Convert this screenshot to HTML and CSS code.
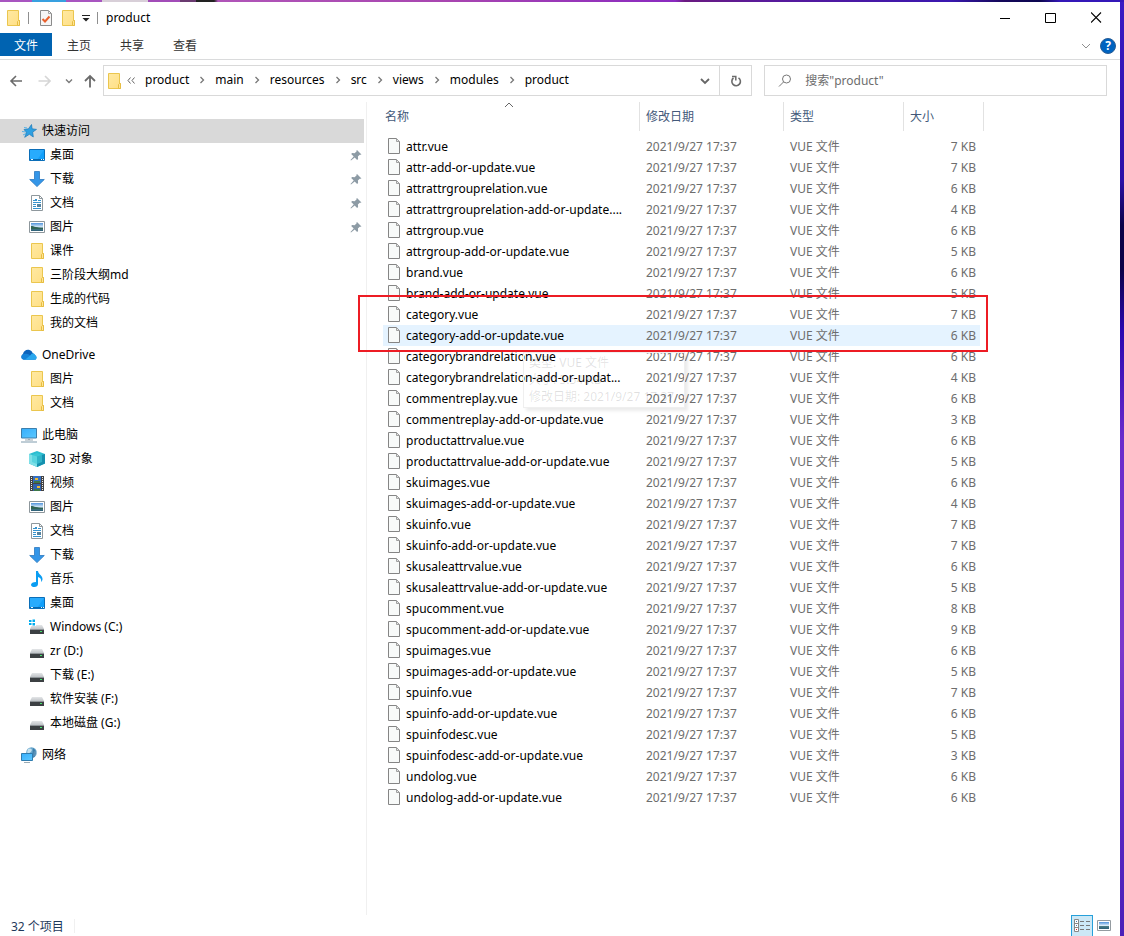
FILE: index.html
```html
<!DOCTYPE html>
<html lang="zh-CN">
<head>
<meta charset="utf-8">
<title>product</title>
<link rel="stylesheet" href="styles.css">
</head>
<body>
<svg class="sprite" aria-hidden="true">
  <defs>
    <linearGradient id="g-folder" x1="0" y1="0" x2="1" y2="1"><stop offset="0" stop-color="#ffe9a2"/><stop offset="1" stop-color="#ffdf85"/></linearGradient>
    <linearGradient id="g-screen" x1="0" y1="0" x2="1" y2="1"><stop offset="0" stop-color="#35aefc"/><stop offset="1" stop-color="#5cc8ff"/></linearGradient>
    <linearGradient id="g-sky" x1="0" y1="0" x2="0" y2="1"><stop offset="0" stop-color="#4f93dc"/><stop offset=".5" stop-color="#dcecf8"/><stop offset=".6" stop-color="#4d7f86"/><stop offset="1" stop-color="#2c5f78"/></linearGradient>
    <linearGradient id="g-drive" x1="0" y1="0" x2="0" y2="1"><stop offset="0" stop-color="#e4e6e8"/><stop offset="1" stop-color="#bfc3c7"/></linearGradient>
  </defs>
  <symbol id="i-folder" viewBox="0 0 16 16"><path d="M2.5.5h11v10h1v5h-12z" fill="url(#g-folder)" stroke="#ebc64e"/><path d="M12.5 15.5v-4l1-1h1v5z" fill="#ffe596" stroke="#e6bd42"/></symbol>
  <symbol id="i-file" viewBox="0 0 16 16"><path d="M2.5.5h8l3 3v12h-11z" fill="#f8faf9" stroke="#858585"/><path d="M10.500.5v3h3z" fill="#e4e6e6" stroke="#a0a0a0"/></symbol>
  <symbol id="i-check" viewBox="0 0 16 16"><path d="M2.500.5h8l3 3v12h-11z" fill="#f5f5f5" stroke="#8b8b8b"/><path d="M10.500.5v3h3" fill="none" stroke="#a5a5a5"/><path d="m4.500 9 2.500 2.500 4.500-5" fill="none" stroke="#e8602c" stroke-width="2"/></symbol>
  <symbol id="i-star" viewBox="0 0 16 16"><path d="m10.500 1.500.6 4.300 4.400.6-3.800 2.700.6 4.900-3.900-2.700-4.700 3L5.500 9.500 3 6.500l4.500-.7z" fill="#2ea0e2" stroke="#1d78b8" stroke-width=".7"/><path d="M3 4.500 6 5M1 8.500l4 .5M2 12l3-1.500" stroke="#57b0e4"/></symbol>
  <symbol id="i-desktop" viewBox="0 0 16 16"><path d="M.5 2.500h15v11H.5z" fill="#12a0fb" stroke="#0b6eb8"/><path d="m1 3h14L8 13H1z" fill="#45b7ff" opacity=".45"/><path d="M1 12.500h14" stroke="#0767ad"/><path d="M2 12.500h2m8 0h1m1 0h1" stroke="#e9f7ff"/></symbol>
  <symbol id="i-down" viewBox="0 0 16 16"><path d="M5.500.5h5v8h4.800L8 15.600.7 8.500h4.800z" fill="#3496e8" stroke="#2b79bf" stroke-width=".8"/></symbol>
  <symbol id="i-doc" viewBox="0 0 16 16"><path d="M2.500.5h8l3 3v12h-11z" fill="#fff" stroke="#8f989d"/><path d="M10.500.5v3h3" fill="none" stroke="#8f989d"/><path d="M4 5.500h1m1-1h2m-3 1h3m1 0h3M4 7.500h8M4 9.500h3M4 11.500h3M4 13.500h8" stroke="#3593ce"/><path d="M8 9h4v3H8z" fill="#55839f"/></symbol>
  <symbol id="i-pic" viewBox="0 0 16 16"><path d="M.5 2.500h15v11H.5z" fill="#fff" stroke="#8d969b"/><path d="M2 4h12v8H2z" fill="url(#g-sky)"/><path d="M2 7c3 0 6 2 12 2v1H2z" fill="#2f6353"/></symbol>
  <symbol id="i-cloud" viewBox="0 0 16 16"><path d="M2.500 12.500A3 3 0 0 1 2 7c.5-3 3.500-5 6.500-4 1.500.4 2.400 1.400 3 2.700L15 9v3.500z" fill="#0c63bb"/><path d="M2.600 12.800C-.8 12-.3 7.200 3.300 7c3-1 5 .5 6.700 2l4 3.500z" fill="#1583d8"/><path d="M4 12.800 9.700 8c1-2 4-2 4.600.4 2.300.8 2 4.400-.7 4.400z" fill="#2aa7ee"/></symbol>
  <symbol id="i-pc" viewBox="0 0 16 16"><path d="M.5 1.500h15v9.500H.5z" fill="url(#g-screen)" stroke="#3c7fad"/><path d="M7 11.500h2v1.500H7z" fill="#a4b5bf"/><path d="M4 13h8" stroke="#98a7b1"/><path d="M0 15h16" stroke="#7f9bad"/></symbol>
  <symbol id="i-cube" viewBox="0 0 16 16"><path d="m0 3 8-3 8 3v9.500L8 16l-8-3.500z" fill="#2cbdd0"/><path d="m0 3 8 2.500V16l-8-3.500z" fill="#7fe0e8"/><path d="m8 5.500 8-2.500v9.500L8 16z" fill="#1590ae"/><path d="m3 4 5-2 5 2v7l-5 2-5-2z" fill="#41ccd9" opacity=".6"/></symbol>
  <symbol id="i-video" viewBox="0 0 16 16"><path d="M1 1h14v15H1z" fill="#444"/><path d="M4 1h8v7H4z" fill="#3670c2"/><path d="M4 9h8v7H4z" fill="#2f61ae"/><path d="M6 3h3v2H6zm2 8h3v2H8z" fill="#edbb37"/><path d="M5 6h6v2H5zm0 8h6v2H5z" fill="#3e7849"/><path d="M2.500 2v14M13.500 2v14" stroke="#eee" stroke-dasharray="1 1"/></symbol>
  <symbol id="i-note" viewBox="0 0 16 16"><path d="M7 0h2c.3 3.500 5 4.500 4.500 8.500-.2 1-.8 2-1.500 2.500.7-2.600-.5-4.500-3-5V13c0 1.800-1.600 3-3.500 3S2 15.200 2 13.700 4 11 7 11z" fill="#0b9df2"/></symbol>
  <symbol id="i-drive" viewBox="0 0 16 16"><path d="m3 6h10l2 4H1z" fill="url(#g-drive)"/><path d="M1 10h14v5H1z" fill="#3c4043"/><path d="M1 10.500h14" stroke="#8f9498"/><path d="M11 12.500h2" stroke="#45e46c"/></symbol>
  <symbol id="i-windrive" viewBox="0 0 16 16"><path d="m3 6h10l2 4H1z" fill="url(#g-drive)"/><path d="M1 10h14v5H1z" fill="#3c4043"/><path d="M1 10.500h14" stroke="#8f9498"/><path d="M11 12.500h2" stroke="#45e46c"/><path d="M0 0h7v7H0z" fill="#fff"/><path d="M0 1h2.500v2H0zm3.500-.5H6V3H3.500zM0 4h2.500v2H0zm3.500 0H6v2.500H3.500z" fill="#00adef"/></symbol>
  <symbol id="i-net" viewBox="0 0 16 16"><circle cx="10.500" cy="5.500" r="5.300" fill="#6aa8ce"/><path d="M7 2c2-1.500 5 0 3.500 2S8 7 6 5.500zm6 2 2.500 1-1 4-2.500.5z" fill="#c4e0ee"/><path d="M12 1c3 2 4.500 6 1 9.500L11 11z" fill="#2c6e9e" opacity=".7"/><path d="M.5 6.500h11v7H.5z" fill="url(#g-screen)" stroke="#2f7cae"/><path d="M3 15.500h6" stroke="#9aabb5"/></symbol>
  <symbol id="i-pin" viewBox="0 0 12 12"><path d="m7 1 4.500 4.500-1 .3-.8-.1-1.800 1.900.2 2.400-1 .9-2.400-2.500L1 11.500.5 11l3.200-3.500L1.200 5l.9-1 2.500.2 1.900-1.800L6.500 1.500z" fill="#8d9ba5"/></symbol>
  <symbol id="i-chev" viewBox="0 0 6 8"><path d="m1.500 1 3 3-3 3" fill="none" stroke="#777" stroke-width="1.300"/></symbol>
</svg>

<div class="window">
  <header class="titlebar">
    <svg class="ico"><use href="#i-folder"/></svg>
    <span class="tick"></span>
    <button class="quick" aria-label="属性"><svg class="ico"><use href="#i-check"/></svg></button>
    <button class="quick" aria-label="新建文件夹"><svg class="ico"><use href="#i-folder"/></svg></button>
    <button class="quick-menu" aria-label="自定义快速访问工具栏"><svg class="small" viewBox="0 0 8 8"><path d="M0 1.500h8" stroke="#222"/><path d="M.5 4h7L4 7.500z" fill="#222"/></svg></button>
    <span class="tick"></span>
    <h1 class="title">product</h1>
    <div class="controls">
      <button aria-label="最小化"><svg viewBox="0 0 12 12"><path d="M1 6.500h10" stroke="#000"/></svg></button>
      <button aria-label="最大化"><svg viewBox="0 0 12 12"><path d="M.5 1.500h10v9H.5z" fill="none" stroke="#000"/></svg></button>
      <button aria-label="关闭"><svg viewBox="0 0 12 12"><path d="m0 .5 10 10M10 .5l-10 10" stroke="#000" stroke-width="1.100"/></svg></button>
    </div>
  </header>

  <div class="ribbon">
    <button class="tab tab-file">文件</button>
    <button class="tab">主页</button>
    <button class="tab">共享</button>
    <button class="tab">查看</button>
    <div class="ribbon-end">
      <button aria-label="展开功能区"><svg class="expand" viewBox="0 0 10 8"><path d="m1 2 4 4 4-4" fill="none" stroke="#8f8f8f"/></svg></button>
      <button class="help" aria-label="帮助">?</button>
    </div>
  </div>

  <div class="navbar">
    <div class="arrows">
      <button aria-label="后退"><svg class="arrow" viewBox="0 0 14 14"><path d="M13 7H2m5-5L2 7l5 5" fill="none" stroke="#6b6b6b" stroke-width="1.600"/></svg></button>
      <button aria-label="前进" disabled><svg class="arrow" viewBox="0 0 14 14"><path d="M1.500 7H13M8 2l5 5-5 5" fill="none" stroke="#d6d6d6" stroke-width="1.600"/></svg></button>
      <button aria-label="最近浏览的位置"><svg class="small" viewBox="0 0 8 8"><path d="m1 2.500 3 3 3-3" fill="none" stroke="#7a7a7a" stroke-width="1.400"/></svg></button>
      <button aria-label="上移"><svg class="arrow" viewBox="0 0 14 14"><path d="M7 13.500V2M2 7l5-5 5 5" fill="none" stroke="#6b6b6b" stroke-width="1.800"/></svg></button>
    </div>
    <div class="address">
      <svg class="ico"><use href="#i-folder"/></svg>
      <nav class="crumbs" aria-label="路径">
        <svg class="laquo" viewBox="0 0 8 8"><path d="M3.500 1 1 4l2.500 3M7.500 1 5 4l2.500 3" fill="none" stroke="#666"/></svg>
        <a href="#">product</a><svg class="chev"><use href="#i-chev"/></svg>
        <a href="#">main</a><svg class="chev"><use href="#i-chev"/></svg>
        <a href="#">resources</a><svg class="chev"><use href="#i-chev"/></svg>
        <a href="#">src</a><svg class="chev"><use href="#i-chev"/></svg>
        <a href="#">views</a><svg class="chev"><use href="#i-chev"/></svg>
        <a href="#">modules</a><svg class="chev"><use href="#i-chev"/></svg>
        <a href="#">product</a>
      </nav>
      <button class="history" aria-label="以前的位置"><svg class="expand" viewBox="0 0 10 8"><path d="m1 2 4 4 4-4" fill="none" stroke="#666" stroke-width="1.800"/></svg></button>
      <button class="refresh" aria-label="刷新"><svg class="arrow" viewBox="0 0 14 14"><path d="M9.500 3.800A4.300 4.300 0 1 1 4.500 4" fill="none" stroke="#6b6b6b" stroke-width="1.600"/><path d="M3 2.500h3.800v4" fill="none" stroke="#6b6b6b" stroke-width="1.500"/></svg></button>
    </div>
    <label class="search">
      <svg class="arrow" viewBox="0 0 14 14"><circle cx="8.500" cy="5" r="4" fill="none" stroke="#777"/><path d="M5.600 7.900 1 12.500" stroke="#777"/></svg>
      <input type="text" aria-label="搜索" placeholder='搜索"product"'>
    </label>
  </div>

  <div class="body">
    <nav class="sidebar" aria-label="导航窗格">
      <ul class="group">
        <li><a class="root current" href="#"><svg class="ico"><use href="#i-star"/></svg>快速访问</a></li>
        <li><a href="#"><svg class="ico"><use href="#i-desktop"/></svg>桌面<svg class="pin"><use href="#i-pin"/></svg></a></li>
        <li><a href="#"><svg class="ico"><use href="#i-down"/></svg>下载<svg class="pin"><use href="#i-pin"/></svg></a></li>
        <li><a href="#"><svg class="ico"><use href="#i-doc"/></svg>文档<svg class="pin"><use href="#i-pin"/></svg></a></li>
        <li><a href="#"><svg class="ico"><use href="#i-pic"/></svg>图片<svg class="pin"><use href="#i-pin"/></svg></a></li>
        <li><a href="#"><svg class="ico"><use href="#i-folder"/></svg>课件</a></li>
        <li><a href="#"><svg class="ico"><use href="#i-folder"/></svg>三阶段大纲md</a></li>
        <li><a href="#"><svg class="ico"><use href="#i-folder"/></svg>生成的代码</a></li>
        <li><a href="#"><svg class="ico"><use href="#i-folder"/></svg>我的文档</a></li>
      </ul>
      <ul class="group">
        <li><a class="root" href="#"><svg class="ico"><use href="#i-cloud"/></svg>OneDrive</a></li>
        <li><a href="#"><svg class="ico"><use href="#i-folder"/></svg>图片</a></li>
        <li><a href="#"><svg class="ico"><use href="#i-folder"/></svg>文档</a></li>
      </ul>
      <ul class="group">
        <li><a class="root" href="#"><svg class="ico"><use href="#i-pc"/></svg>此电脑</a></li>
        <li><a href="#"><svg class="ico"><use href="#i-cube"/></svg>3D 对象</a></li>
        <li><a href="#"><svg class="ico"><use href="#i-video"/></svg>视频</a></li>
        <li><a href="#"><svg class="ico"><use href="#i-pic"/></svg>图片</a></li>
        <li><a href="#"><svg class="ico"><use href="#i-doc"/></svg>文档</a></li>
        <li><a href="#"><svg class="ico"><use href="#i-down"/></svg>下载</a></li>
        <li><a href="#"><svg class="ico"><use href="#i-note"/></svg>音乐</a></li>
        <li><a href="#"><svg class="ico"><use href="#i-desktop"/></svg>桌面</a></li>
        <li><a href="#"><svg class="ico"><use href="#i-windrive"/></svg>Windows (C:)</a></li>
        <li><a href="#"><svg class="ico"><use href="#i-drive"/></svg>zr (D:)</a></li>
        <li><a href="#"><svg class="ico"><use href="#i-drive"/></svg>下载 (E:)</a></li>
        <li><a href="#"><svg class="ico"><use href="#i-drive"/></svg>软件安装 (F:)</a></li>
        <li><a href="#"><svg class="ico"><use href="#i-drive"/></svg>本地磁盘 (G:)</a></li>
      </ul>
      <ul class="group">
        <li><a class="root" href="#"><svg class="ico"><use href="#i-net"/></svg>网络</a></li>
      </ul>
    </nav>

    <main class="files">
      <table>
        <colgroup><col class="c-name"><col class="c-date"><col class="c-type"><col class="c-size"></colgroup>
        <thead>
          <tr><th>名称<svg class="sort" viewBox="0 0 10 6"><path d="m1 5 4-4 4 4" fill="none" stroke="#666"/></svg></th><th>修改日期</th><th>类型</th><th>大小</th></tr>
        </thead>
        <tbody>
          <tr><td><div class="name"><svg class="ico"><use href="#i-file"/></svg><span>attr.vue</span></div></td><td>2021/9/27 17:37</td><td>VUE 文件</td><td>7 KB</td></tr>
          <tr><td><div class="name"><svg class="ico"><use href="#i-file"/></svg><span>attr-add-or-update.vue</span></div></td><td>2021/9/27 17:37</td><td>VUE 文件</td><td>7 KB</td></tr>
          <tr><td><div class="name"><svg class="ico"><use href="#i-file"/></svg><span>attrattrgrouprelation.vue</span></div></td><td>2021/9/27 17:37</td><td>VUE 文件</td><td>6 KB</td></tr>
          <tr><td><div class="name"><svg class="ico"><use href="#i-file"/></svg><span>attrattrgrouprelation-add-or-update....</span></div></td><td>2021/9/27 17:37</td><td>VUE 文件</td><td>4 KB</td></tr>
          <tr><td><div class="name"><svg class="ico"><use href="#i-file"/></svg><span>attrgroup.vue</span></div></td><td>2021/9/27 17:37</td><td>VUE 文件</td><td>6 KB</td></tr>
          <tr><td><div class="name"><svg class="ico"><use href="#i-file"/></svg><span>attrgroup-add-or-update.vue</span></div></td><td>2021/9/27 17:37</td><td>VUE 文件</td><td>5 KB</td></tr>
          <tr><td><div class="name"><svg class="ico"><use href="#i-file"/></svg><span>brand.vue</span></div></td><td>2021/9/27 17:37</td><td>VUE 文件</td><td>6 KB</td></tr>
          <tr><td><div class="name"><svg class="ico"><use href="#i-file"/></svg><span>brand-add-or-update.vue</span></div></td><td>2021/9/27 17:37</td><td>VUE 文件</td><td>5 KB</td></tr>
          <tr><td><div class="name"><svg class="ico"><use href="#i-file"/></svg><span>category.vue</span></div></td><td>2021/9/27 17:37</td><td>VUE 文件</td><td>7 KB</td></tr>
          <tr class="hover"><td><div class="name"><svg class="ico"><use href="#i-file"/></svg><span>category-add-or-update.vue</span></div></td><td>2021/9/27 17:37</td><td>VUE 文件</td><td>6 KB</td></tr>
          <tr><td><div class="name"><svg class="ico"><use href="#i-file"/></svg><span>categorybrandrelation.vue</span></div></td><td>2021/9/27 17:37</td><td>VUE 文件</td><td>6 KB</td></tr>
          <tr><td><div class="name"><svg class="ico"><use href="#i-file"/></svg><span>categorybrandrelation-add-or-updat...</span></div></td><td>2021/9/27 17:37</td><td>VUE 文件</td><td>4 KB</td></tr>
          <tr><td><div class="name"><svg class="ico"><use href="#i-file"/></svg><span>commentreplay.vue</span></div></td><td>2021/9/27 17:37</td><td>VUE 文件</td><td>6 KB</td></tr>
          <tr><td><div class="name"><svg class="ico"><use href="#i-file"/></svg><span>commentreplay-add-or-update.vue</span></div></td><td>2021/9/27 17:37</td><td>VUE 文件</td><td>3 KB</td></tr>
          <tr><td><div class="name"><svg class="ico"><use href="#i-file"/></svg><span>productattrvalue.vue</span></div></td><td>2021/9/27 17:37</td><td>VUE 文件</td><td>6 KB</td></tr>
          <tr><td><div class="name"><svg class="ico"><use href="#i-file"/></svg><span>productattrvalue-add-or-update.vue</span></div></td><td>2021/9/27 17:37</td><td>VUE 文件</td><td>5 KB</td></tr>
          <tr><td><div class="name"><svg class="ico"><use href="#i-file"/></svg><span>skuimages.vue</span></div></td><td>2021/9/27 17:37</td><td>VUE 文件</td><td>6 KB</td></tr>
          <tr><td><div class="name"><svg class="ico"><use href="#i-file"/></svg><span>skuimages-add-or-update.vue</span></div></td><td>2021/9/27 17:37</td><td>VUE 文件</td><td>4 KB</td></tr>
          <tr><td><div class="name"><svg class="ico"><use href="#i-file"/></svg><span>skuinfo.vue</span></div></td><td>2021/9/27 17:37</td><td>VUE 文件</td><td>7 KB</td></tr>
          <tr><td><div class="name"><svg class="ico"><use href="#i-file"/></svg><span>skuinfo-add-or-update.vue</span></div></td><td>2021/9/27 17:37</td><td>VUE 文件</td><td>7 KB</td></tr>
          <tr><td><div class="name"><svg class="ico"><use href="#i-file"/></svg><span>skusaleattrvalue.vue</span></div></td><td>2021/9/27 17:37</td><td>VUE 文件</td><td>6 KB</td></tr>
          <tr><td><div class="name"><svg class="ico"><use href="#i-file"/></svg><span>skusaleattrvalue-add-or-update.vue</span></div></td><td>2021/9/27 17:37</td><td>VUE 文件</td><td>5 KB</td></tr>
          <tr><td><div class="name"><svg class="ico"><use href="#i-file"/></svg><span>spucomment.vue</span></div></td><td>2021/9/27 17:37</td><td>VUE 文件</td><td>8 KB</td></tr>
          <tr><td><div class="name"><svg class="ico"><use href="#i-file"/></svg><span>spucomment-add-or-update.vue</span></div></td><td>2021/9/27 17:37</td><td>VUE 文件</td><td>9 KB</td></tr>
          <tr><td><div class="name"><svg class="ico"><use href="#i-file"/></svg><span>spuimages.vue</span></div></td><td>2021/9/27 17:37</td><td>VUE 文件</td><td>6 KB</td></tr>
          <tr><td><div class="name"><svg class="ico"><use href="#i-file"/></svg><span>spuimages-add-or-update.vue</span></div></td><td>2021/9/27 17:37</td><td>VUE 文件</td><td>5 KB</td></tr>
          <tr><td><div class="name"><svg class="ico"><use href="#i-file"/></svg><span>spuinfo.vue</span></div></td><td>2021/9/27 17:37</td><td>VUE 文件</td><td>7 KB</td></tr>
          <tr><td><div class="name"><svg class="ico"><use href="#i-file"/></svg><span>spuinfo-add-or-update.vue</span></div></td><td>2021/9/27 17:37</td><td>VUE 文件</td><td>6 KB</td></tr>
          <tr><td><div class="name"><svg class="ico"><use href="#i-file"/></svg><span>spuinfodesc.vue</span></div></td><td>2021/9/27 17:37</td><td>VUE 文件</td><td>5 KB</td></tr>
          <tr><td><div class="name"><svg class="ico"><use href="#i-file"/></svg><span>spuinfodesc-add-or-update.vue</span></div></td><td>2021/9/27 17:37</td><td>VUE 文件</td><td>3 KB</td></tr>
          <tr><td><div class="name"><svg class="ico"><use href="#i-file"/></svg><span>undolog.vue</span></div></td><td>2021/9/27 17:37</td><td>VUE 文件</td><td>6 KB</td></tr>
          <tr><td><div class="name"><svg class="ico"><use href="#i-file"/></svg><span>undolog-add-or-update.vue</span></div></td><td>2021/9/27 17:37</td><td>VUE 文件</td><td>6 KB</td></tr>
        </tbody>
      </table>
      <div class="tooltip" role="tooltip">类型: VUE 文件<br>大小: 5.54 KB<br>修改日期: 2021/9/27 17:37</div>
      <div class="marker"></div>
    </main>
  </div>

  <footer class="status">
    <span class="count">32 个项目</span>
    <div class="views">
      <button class="view active" aria-label="详细信息"><svg class="view-ico" viewBox="0 0 16 14"><path d="M.5.5h4v12h-4zM.5 4.500h4M.5 8.500h4" fill="#fff" stroke="#888"/><path d="M2 2.500h1M2 6.500h1" stroke="#4a7ba8"/><path d="M2 10.500h1" stroke="#d22"/><path d="M6 2.500h4m2 0h4M6 6.500h4m2 0h4M6 10.500h4m2 0h4" stroke="#777"/></svg></button>
      <button class="view" aria-label="大图标"><svg class="view-ico" viewBox="0 0 16 14"><path d="M1.500 1.500h13v10h-13z" fill="#fff" stroke="#949ba0"/><path d="M3 3h10v7H3z" fill="url(#g-sky)"/></svg></button>
    </div>
  </footer>
</div>
</body>
</html>
```
FILE: styles.css
```css
* { box-sizing: border-box; }

body {
  margin: 0;
  padding: 2px 4px 0 0;
  min-height: 100vh;
  display: flex;
  background:
    linear-gradient(90deg, #a855c0 0 32px, #38a0e0 32px 66px, #a855c0 66px 102px, #d8cfd8 102px 148px, #a24cb8 148px 180px, #6a3a70 180px 196px, #222 196px 214px, #b055b8 218px, #a845b0 450px, #8a2ac0 675px, #6a1a80 685px, #5a1a9a 760px, #3a18b0 950px, #14085a 1000px, #0c0650 1040px, #3418b8 1060px) top / 100% 2px no-repeat,
    linear-gradient(180deg, #3a1cc4 0, #2c10a8 180px, #0a0348 225px, #0a0348 270px, #2a08b0 330px, #6a2ccc 440px, #7a38cc 650px, #5a28c4 800px, #4a20b8 100%);
  color: #000;
  font: 12px/20px "Noto Sans", "Noto Sans CJK SC", sans-serif;
}

button {
  margin: 0;
  padding: 0;
  border: 0;
  background: none;
  color: inherit;
  font: inherit;
  display: flex;
  align-items: center;
  justify-content: center;
}

a { color: inherit; text-decoration: none; }
svg { display: block; flex: none; }
.sprite { position: absolute; width: 0; height: 0; }
.ico { width: 16px; height: 16px; }
.small { width: 8px; height: 8px; }
.arrow { width: 14px; height: 14px; }
.expand { width: 10px; height: 8px; }

.window {
  flex: 1;
  min-width: 0;
  display: flex;
  flex-direction: column;
  background: #fff;
}

.titlebar {
  display: flex;
  align-items: center;
  height: 31px;
  padding-left: 5px;
}
.tick { width: 1px; height: 12px; margin: 0 6px 0 7px; background: #8f8f8f; }
.quick { margin: 0 3px; }
.quick-menu { margin-left: 3px; }
.title { margin: 0; padding-left: 2px; font-size: 12px; font-weight: 400; }
.controls { display: flex; margin-left: auto; align-self: stretch; }
.controls button { width: 46px; }
.controls svg { width: 12px; height: 12px; }

.ribbon {
  display: flex;
  gap: 1px;
  height: 27px;
  border-bottom: 1px solid #dadbdc;
}
.tab { height: 23px; padding: 2px 14px 0; color: #333; }
.tab-file { background: #0063b1; color: #fff; }
.ribbon-end { display: flex; align-items: center; gap: 9px; margin-left: auto; padding-right: 4px; }
.help {
  width: 16px;
  height: 16px;
  border-radius: 50%;
  background: #0063c0;
  border: 1px solid #2a5d95;
  color: #fff;
  font-weight: 700;
}

.navbar {
  display: flex;
  align-items: center;
  padding: 5px 13px 0 9px;
}
.arrows { display: flex; align-items: center; gap: 14px; padding-right: 6px; }
.arrows button:nth-child(3) { margin-right: -4px; }
.address {
  flex: 19 1 0;
  display: flex;
  align-items: center;
  height: 31px;
  border: 1px solid #d9d9d9;
}
.address .ico { margin-left: 2px; }
.crumbs { display: flex; align-items: center; gap: 10px; margin-left: 5px; line-height: 18px; padding-bottom: 1px; }
.laquo { width: 8px; height: 9px; }
.chev { width: 6px; height: 8px; }
.history { width: 29px; height: 29px; margin-left: auto; }
.refresh { width: 32px; height: 29px; border-left: 1px solid #d9d9d9; }
.search {
  flex: 10 1 0;
  display: flex;
  align-items: center;
  gap: 13px;
  height: 31px;
  margin-left: 12px;
  border: 1px solid #d9d9d9;
}
.search svg { margin-left: 13px; }
.search input {
  flex: 1;
  min-width: 0;
  padding: 0;
  border: 0;
  outline: 0;
  background: none;
  font: inherit;
}
.search input::placeholder { color: #6d6d6d; opacity: 1; }

.body { flex: 1; display: flex; padding-top: 6px; }

.sidebar { width: 367px; padding: 17px 2px 0 0; border-right: 1px solid #f0f0f0; }
.group { margin: 0 0 8px; padding: 0; list-style: none; }
.group a {
  display: flex;
  align-items: center;
  gap: 5px;
  height: 24px;
  padding: 0 2px 0 29px;
}
.group .root { padding-left: 21px; }
.group .current { background: #d9d9d9; }
.pin { width: 12px; height: 12px; margin-left: auto; }

.files { position: relative; flex: 1; min-width: 0; padding-left: 16px; }
table { width: 601px; table-layout: fixed; border-collapse: separate; border-spacing: 0; }
.c-name { width: 257px; }
.c-date { width: 144px; }
.c-type { width: 120px; }
.c-size { width: 80px; }
th {
  position: relative;
  height: 29px;
  padding: 0 0 0 6px;
  border-right: 1px solid #e2e2e2;
  color: #43597a;
  font-weight: 400;
  text-align: left;
}
th:first-child { padding-left: 2px; }
.sort { position: absolute; top: 0; left: 50%; width: 10px; height: 6px; margin-left: -7px; }
tbody::before { content: ""; display: block; height: 5px; }
td { height: 21px; padding: 0 0 0 6px; color: #6d6d6d; white-space: nowrap; }
td:first-child { padding-left: 3px; color: #000; }
td:last-child {
  padding-right: 4px;
  border-right: 4px solid transparent;
  background-clip: padding-box;
  text-align: right;
}
.name { display: flex; gap: 4px; height: 21px; line-height: 21px; }
.name .ico { margin-top: 2px; }
.hover td { background-color: #e5f3ff; }

.tooltip {
  position: absolute;
  top: 250px;
  left: 156px;
  padding: 1px 5px 2px;
  width: 162px;
  border: 1px solid #efefef;
  box-shadow: 3px 3px 3px rgba(0, 0, 0, .08);
  color: rgba(0, 0, 0, .12);
  line-height: 17px;
  white-space: nowrap;
}
.marker {
  position: absolute;
  top: 193px;
  left: -9px;
  width: 630px;
  height: 57px;
  border: 2px solid #ed1c24;
}

.status {
  display: flex;
  align-items: center;
  height: 21px;
  padding: 0 5px 0 11px;
  color: #1e395b;
}
.count { padding: 2px 10px 0 0; line-height: 12px; border-right: 1px solid #f0f0f0; }
.views { display: flex; margin-left: auto; }
.view { width: 22px; height: 21px; }
.view.active { background: #cce8f6; border: 1px solid #26a0da; border-bottom: 0; }
.view-ico { width: 16px; height: 14px; }
```
